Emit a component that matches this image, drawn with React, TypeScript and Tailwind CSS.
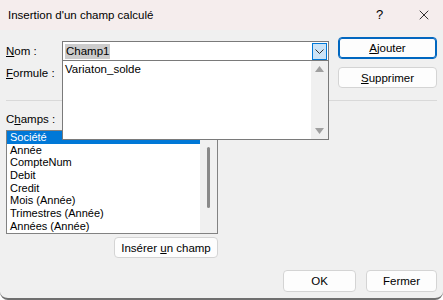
import { X } from "lucide-react";

const fields = [
  "Société",
  "Année",
  "CompteNum",
  "Debit",
  "Credit",
  "Mois (Année)",
  "Trimestres (Année)",
  "Années (Année)",
];

function Btn({ children, primary = false, className = "" }: { children: React.ReactNode; primary?: boolean; className?: string }) {
  return (
    <button
      type="button"
      className={
        "flex items-center justify-center rounded-[4px] bg-[#fdfdfd] text-black " +
        (primary ? "border border-[#0067c0] shadow-[inset_0_0_0_1px_#0067c0]" : "border border-[#d4d4d4]") +
        " " +
        className
      }>
      {children}
    </button>
  );
}

export default function App() {
  return (
    <div className="relative h-[300px] w-[443px] overflow-hidden rounded-b-[8px] border-b-2 border-[#6f6f6f] bg-[#f0f0f0] font-['Liberation_Sans',Arial,sans-serif] text-[11.5px] leading-[14px] text-black">
      {/* title bar */}
      <div className="flex h-[30px] items-center bg-[#f5eded] pl-[8px]">
        <span className="flex-1">Insertion d'un champ calculé</span>
        <span className="w-[20px] text-[13px]">?</span>
        <span className="ml-[18px] mr-[9px] flex w-[20px] justify-center">
          <X size={16} strokeWidth={1.2} />
        </span>
      </div>

      <div className="flex px-[6px] pt-[7px]">
        <div className="flex w-[323px] flex-col">
          <div className="mt-[4px] flex h-[20px] items-center">
            <span className="w-[56px]">
              <u>N</u>om :
            </span>
            <div className="flex h-[20px] flex-1 items-center border border-[#7a7a7a] bg-white pl-[2px]">
              <span className="bg-[#cccccc] px-[1px] leading-[15px]">Champ1</span>
              <span className="ml-auto mr-[1px] flex h-[17px] w-[15px] items-center justify-center border border-[#0078d7] bg-[#cce4f7]">
                <svg width="9" height="5" viewBox="0 0 9 5">
                  <path d="M0.5 0.5 L4.5 4.5 L8.5 0.5" fill="none" stroke="#333" strokeWidth="1" />
                </svg>
              </span>
            </div>
          </div>
          <div className="mt-[2px] flex h-[20px] items-center">
            <span className="w-[56px]">
              <u>F</u>ormule :
            </span>
          </div>
        </div>
        <div className="ml-[9px] flex w-[99px] flex-col gap-[8px]">
          <Btn primary className="h-[22px]">
            <span>
              <u>A</u>jouter
            </span>
          </Btn>
          <Btn className="h-[21px]">
            <span>
              <u>S</u>upprimer
            </span>
          </Btn>
        </div>
      </div>

      <div className="mx-[6px] mt-[12px] h-px bg-[#d9d9d9]" />

      <div className="mt-[11px] px-[6px]">
        C<u>h</u>amps :
      </div>

      <div className="ml-[6px] mt-[4px] flex h-[104px] w-[212px] border border-[#828282] bg-white">
        <div className="flex flex-1 flex-col text-[11px]">
          {fields.map((f, i) => (
            <div
              key={f}
              className={"h-[12.7px] pl-[3px] leading-[12.7px] " + (i === 0 ? "bg-[#0078d7] text-white" : "")}>
              {f}
            </div>
          ))}
        </div>
        <div className="flex w-[17px] justify-center bg-[#f0f0f0] pt-[16px]">
          <div className="h-[61px] w-[3px] rounded-full bg-[#8a8a8a]" />
        </div>
      </div>

      <div className="ml-[114px] mt-[3px] flex">
        <Btn className="h-[21px] w-[104px]">
          <span>
            Insérer <u>u</u>n champ
          </span>
        </Btn>
      </div>

      <div className="mr-[6px] mt-[12px] flex justify-end gap-[10px]">
        <Btn className="h-[22px] w-[73px]">OK</Btn>
        <Btn className="h-[22px] w-[71px]">Fermer</Btn>
      </div>

      {/* open dropdown list */}
      <div className="absolute left-[62px] top-[60px] flex h-[80px] w-[267px] border border-[#7a7a7a] bg-white">
        <div className="flex-1 pl-[2px] leading-[17px]">Variaton_solde</div>
        <div className="flex w-[17px] flex-col items-center justify-between bg-[#f0f0f0] py-[5px]">
          <svg width="9" height="6" viewBox="0 0 9 6">
            <path d="M0 6 L4.5 0 L9 6 Z" fill="#a0a0a0" />
          </svg>
          <svg width="9" height="6" viewBox="0 0 9 6">
            <path d="M0 0 L4.5 6 L9 0 Z" fill="#a0a0a0" />
          </svg>
        </div>
      </div>
    </div>
  );
}
